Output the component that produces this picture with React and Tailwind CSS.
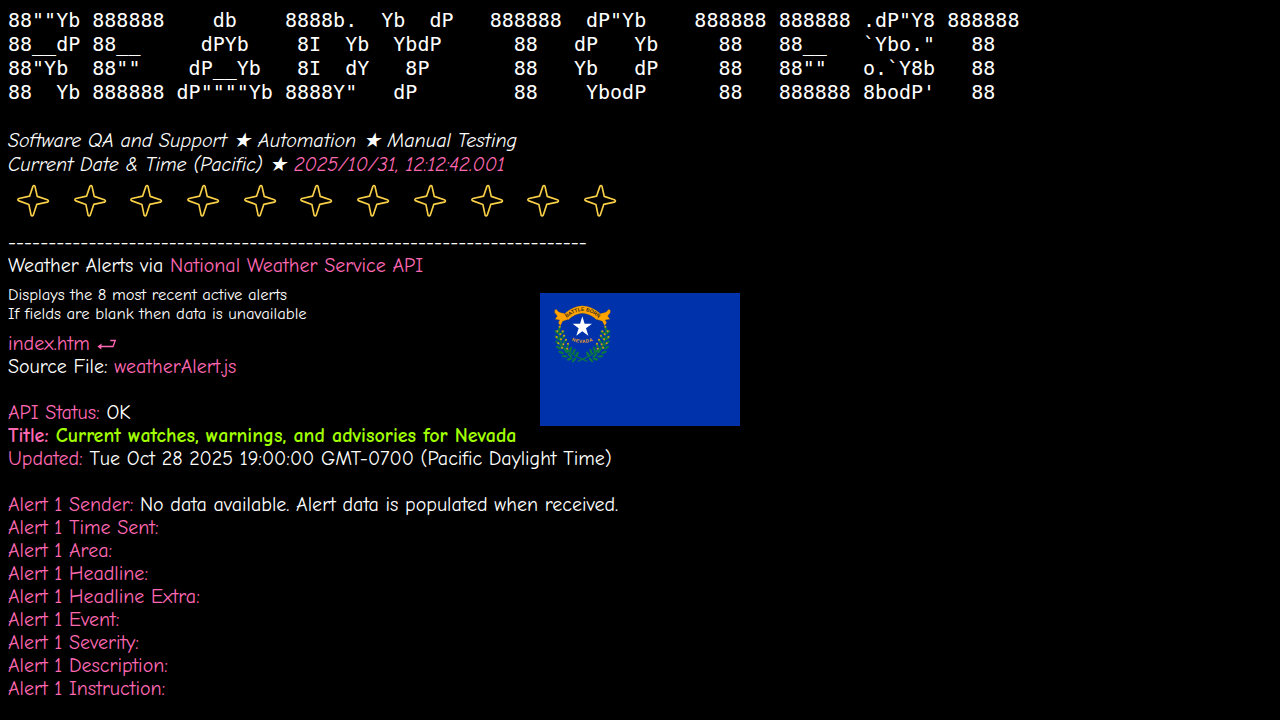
import React from 'react';

const banner = [
  '88""Yb 888888    db    8888b.  Yb  dP   888888  dP"Yb    888888 888888 .dP"Y8 888888',
  '88__dP 88__     dPYb    8I  Yb  YbdP      88   dP   Yb     88   88__   `Ybo."   88',
  '88"Yb  88""    dP__Yb   8I  dY   8P       88   Yb   dP     88   88""   o.`Y8b   88',
  '88  Yb 888888 dP""""Yb 8888Y"   dP        88    YbodP      88   888888 8bodP\'   88',
].join('\n');

const alertFields = ['Time Sent', 'Area', 'Headline', 'Headline Extra', 'Event', 'Severity', 'Description', 'Instruction'];

const leaves = [
  [28, 86, -70], [21, 97, 40], [36, 98, -35], [21, 113, 45], [40, 111, -50], [23, 128, 40],
  [45, 124, -50], [26, 143, 30], [53, 137, -70], [33, 157, 20], [62, 148, -75], [44, 169, 5],
  [72, 155, -70], [59, 177, -20], [81, 163, -60], [72, 180, -50], [34, 138, 60], [46, 151, 50],
  [54, 154, -30], [60, 166, 40], [31, 118, 75],
];

const berries = [[29, 80], [22, 94], [38, 94], [31, 103], [20, 111], [42, 107], [33, 118], [48, 119], [25, 130], [40, 133], [54, 131], [36, 143], [52, 146]];

function WreathSide() {
  return (
    <>
      <path d="M28 84C22 130 44 158 112 184" fill="none" stroke="#0b7345" strokeWidth="3.5" />
      {leaves.map(([x, y, a]) => (
        <ellipse key={`${x}-${y}`} cx={x} cy={y} rx="9" ry="3.6" transform={`rotate(${a} ${x} ${y})`} fill="#0b7840" />
      ))}
      {berries.map(([x, y]) => (
        <circle key={`${x}-${y}`} cx={x} cy={y} r="3.1" fill="#d99a18" />
      ))}
    </>
  );
}

function RibbonEnd() {
  return (
    <path
      d="M57 34L48 44C40 36 26 42 20 28L14 30L14 38L22 48L15 58L29 60L25 68L31 78L38 64L56 58Z"
      fill="#ffa300"
      stroke="#563c24"
      strokeWidth="0.8"
    />
  );
}

function Emblem() {
  return (
    <svg className="h-[66px] w-[66px]" viewBox="0 0 198 198">
      <defs>
        <path id="motto" d="M51 53Q97 13 145 53" />
        <path id="state" d="M62 121Q97 136 134 121" />
      </defs>
      <WreathSide />
      <g transform="translate(195 0) scale(-1 1)">
        <WreathSide />
      </g>
      <RibbonEnd />
      <g transform="translate(195 0) scale(-1 1)">
        <RibbonEnd />
      </g>
      <path d="M45 40Q97 -5 150 40L141 60Q97 20 54 60Z" fill="#ffa300" stroke="#70502a" strokeWidth="0.8" />
      <polygon points="97,49 103.8,71 126,71 108,84.5 115,107 97,93.5 79,107 86,84.5 68,71 90.2,71" fill="#fff" />
      <text className="font-['Liberation_Sans'] text-[15px] font-bold" fill="#372b1b" textAnchor="middle">
        <textPath href="#motto" startOffset="50%">BATTLE BORN</textPath>
      </text>
      <text className="font-['Liberation_Sans'] text-[14px] font-bold tracking-[1.5px]" fill="#e8a01c" textAnchor="middle">
        <textPath href="#state" startOffset="50%">NEVADA</textPath>
      </text>
    </svg>
  );
}

function NevadaFlag() {
  return (
    <div className="absolute top-[293px] left-[540px] h-[133px] w-[200px] bg-[#0033ab] pt-[7px] pl-[10px]">
      <Emblem />
    </div>
  );
}

function Sparkle() {
  return (
    <svg className="h-[34px] w-[34px]" viewBox="-0.4 -0.2 34.6 34.6" fill="none" stroke="#f8cf47" strokeWidth="1.7" strokeLinejoin="round">
      <path d="M16.8 2.2C17.6 .9 18.6 1.2 19 2.4L21.2 12.4L31.5 15.9Q33.8 17.1 31.5 18.3L20.7 20.6L17.2 31.3Q16 33.1 14.9 31.3L12.7 20.6L2.6 17Q.3 15.7 2.6 14.5L13.4 12.2Z" />
    </svg>
  );
}

function ReturnArrow() {
  return (
    <svg className="ml-px inline-block h-3 w-5 align-baseline" viewBox="0 0 20 12" fill="none" stroke="#ff69b4" strokeWidth="1.3">
      <path d="M3 8.5H16L18.3 2.5H13.3" />
      <path d="M.5 8.5L4.6 5.5L4.2 11.5Z" fill="#ff69b4" stroke="none" />
    </svg>
  );
}

function Label({ children }) {
  return <span className="text-[#ff69b4]">{children}</span>;
}

export default function App() {
  return (
    <div className="relative h-[720px] w-[1280px] overflow-hidden bg-black p-2 font-['Comic_Neue',cursive] text-[20px] leading-[23px] whitespace-nowrap text-white">
      <pre className="mb-[25px] font-['DejaVu_Sans_Mono',monospace] text-[20px] leading-6">{banner}</pre>

      <div className="h-12 leading-6 italic">
        <p className="h-6">Software QA and Support ★ Automation ★ Manual Testing</p>
        <p className="h-6">
          Current Date &amp; Time (Pacific) ★ <Label>2025/10/31, 12:12:42.001</Label>
        </p>
      </div>

      <div className="flex h-[54px] gap-[22.7px] pt-[7px] pl-2">
        {Array.from({ length: 11 }, (_, i) => (
          <Sparkle key={i} />
        ))}
      </div>

      <p>{'-'.repeat(72)}</p>
      <p>
        Weather Alerts via <Label>National Weather Service API</Label>
      </p>

      <div className="mt-2 mb-[9px] text-[16.67px] leading-[19px]">
        <p>Displays the 8 most recent active alerts</p>
        <p>If fields are blank then data is unavailable</p>
      </div>

      <p>
        <Label>index.htm</Label> <ReturnArrow />
      </p>
      <p>
        Source File: <Label>weatherAlert.js</Label>
      </p>

      <div className="mt-[23px]">
        <p>
          <Label>API Status:</Label> OK
        </p>
        <p className="font-bold">
          <Label>Title:</Label> <span className="text-[#a2ff00]">Current watches, warnings, and advisories for Nevada</span>
        </p>
        <p>
          <Label>Updated:</Label> Tue Oct 28 2025 19:00:00 GMT-0700 (Pacific Daylight Time)
        </p>
      </div>

      <div className="mt-[23px]">
        <p>
          <Label>Alert 1 Sender:</Label> No data available. Alert data is populated when received.
        </p>
        {alertFields.map((field) => (
          <p key={field}>
            <Label>Alert 1 {field}:</Label>
          </p>
        ))}
      </div>

      <NevadaFlag />
    </div>
  );
}
